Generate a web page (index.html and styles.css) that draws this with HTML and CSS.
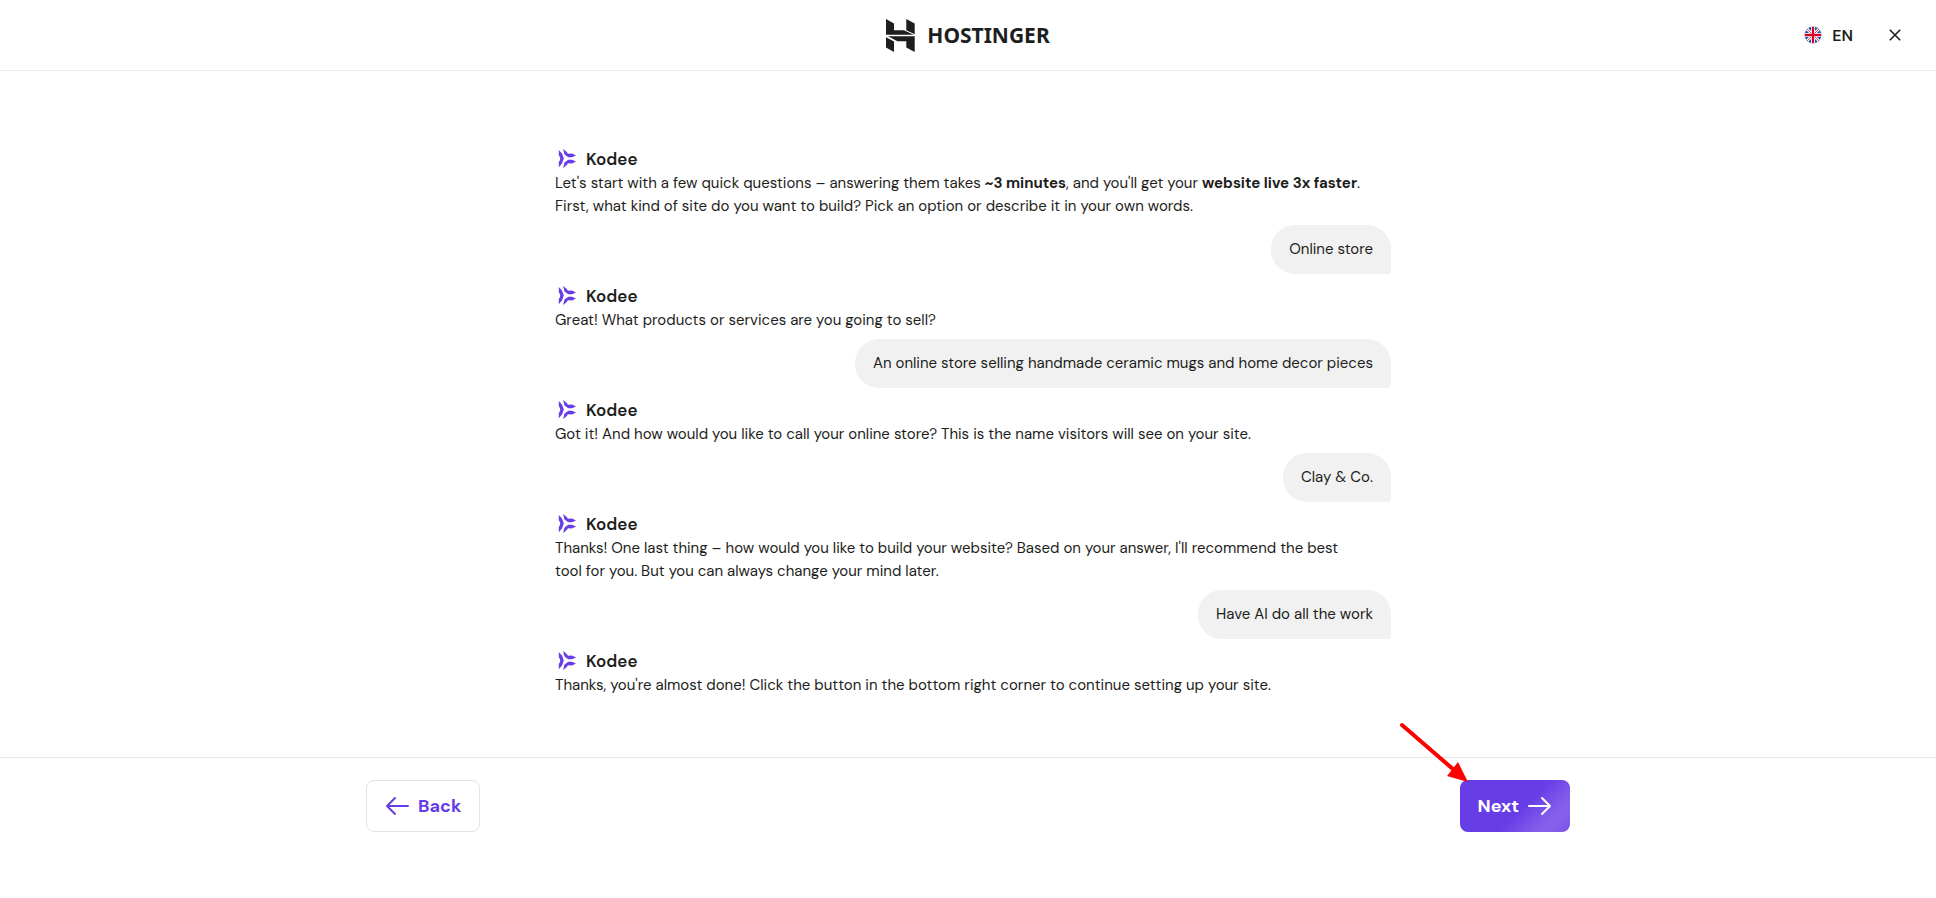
FILE: index.html
```html
<!DOCTYPE html>
<html lang="en">
<head>
<meta charset="utf-8">
<title>Hostinger</title>
<link rel="stylesheet" href="styles.css">
</head>
<body>
<svg class="defs" aria-hidden="true">
  <symbol id="kodee" viewBox="0 0 18 20">
    <path d="M.3 1 3.500 4.500 5.300 9.500 3.500 14.500.3 18.200V13Q3.200 9.500.3 6.200Z"/>
    <path d="M4.600 0 7.800 2.500 9.500 4.700 13.500 4.500 17.500 6.500 13.500 8.200H9.800L6 5.500Z"/>
    <path d="M4.600 19 7.800 16.500 9.500 14.300 13.500 14.500 17.500 12.500 13.500 10.800H9.800L6 13.500Z"/>
  </symbol>
</svg>
<header class="topbar">
  <a class="brand" href="#" aria-label="Hostinger">
    <svg class="brand-mark" viewBox="0 0 29 33" aria-hidden="true"><path d="M0 0 8 4.500V11.300H18L27.500 15.700H0ZM20.300 0 28.700 4.500V15.200L20.300 11.300ZM2 17.300H28.700V33L20.300 28.500V22.200H11.500ZM0 18.300 8 22.500V33L0 28.500Z"/></svg>
    <span class="brand-name">HOSTINGER</span>
  </a>
  <div class="tools">
    <button class="lang" type="button">
      <svg class="flag" viewBox="0 0 18 18" aria-hidden="true">
        <clipPath id="round"><circle cx="9" cy="9" r="8.500"/></clipPath>
        <g clip-path="url(#round)"><path fill="#1456b0" d="M0 0h18v18H0z"/><path stroke="#fff" stroke-width="2.800" d="m0 0 18 18M18 0 0 18"/><path stroke="#e2455f" stroke-width="1" d="m0 0 18 18M18 0 0 18"/><path stroke="#fff" stroke-width="4" d="M9 0v18M0 9h18"/><path stroke="#d80027" stroke-width="2.300" d="M9 0v18M0 9h18"/></g>
        <circle cx="9" cy="9" r="8.600" fill="none" stroke="#e3e3e6" stroke-width=".7"/>
      </svg>
      EN
    </button>
    <button class="close" type="button" aria-label="Close"><svg viewBox="0 0 12 12" aria-hidden="true"><path d="m.8.8 10.400 10.400M11.200.8.8 11.200"/></svg></button>
  </div>
</header>
<main class="chat">
  <div class="thread">
    <section class="turn">
      <h2 class="sender"><svg aria-hidden="true"><use href="#kodee"/></svg>Kodee</h2>
      <p class="message">Let's start with a few quick questions – answering them takes <b>~3 minutes</b>, and you'll get your <b>website live 3x faster</b>.<br>First, what kind of site do you want to build? Pick an option or describe it in your own words.</p>
      <p class="reply">Online store</p>
    </section>
    <section class="turn">
      <h2 class="sender"><svg aria-hidden="true"><use href="#kodee"/></svg>Kodee</h2>
      <p class="message">Great! What products or services are you going to sell?</p>
      <p class="reply">An online store selling handmade ceramic mugs and home decor pieces</p>
    </section>
    <section class="turn">
      <h2 class="sender"><svg aria-hidden="true"><use href="#kodee"/></svg>Kodee</h2>
      <p class="message">Got it! And how would you like to call your online store? This is the name visitors will see on your site.</p>
      <p class="reply">Clay &amp; Co.</p>
    </section>
    <section class="turn">
      <h2 class="sender"><svg aria-hidden="true"><use href="#kodee"/></svg>Kodee</h2>
      <p class="message">Thanks! One last thing – how would you like to build your website? Based on your answer, I'll recommend the best<br>tool for you. But you can always change your mind later.</p>
      <p class="reply">Have AI do all the work</p>
    </section>
    <section class="turn">
      <h2 class="sender"><svg aria-hidden="true"><use href="#kodee"/></svg>Kodee</h2>
      <p class="message">Thanks, you're almost done! Click the button in the bottom right corner to continue setting up your site.</p>
    </section>
  </div>
</main>
<footer class="footer">
  <div class="actions">
    <button class="btn back" type="button"><svg class="arrow" viewBox="0 0 24 20" aria-hidden="true"><path d="M23 10H2M10 2 2 10l8 8"/></svg>Back</button>
    <div class="next-wrap">
      <button class="btn next" type="button">Next<svg class="arrow" viewBox="0 0 24 20" aria-hidden="true"><path d="M1 10h21M14 2l8 8-8 8"/></svg></button>
      <svg class="pointer" viewBox="0 0 70 60" aria-hidden="true"><path class="shaft" d="M3 3 55 48"/><path class="head" d="M69 60 59 40 48 54Z"/></svg>
    </div>
  </div>
</footer>
</body>
</html>
```
FILE: styles.css
```css
* { box-sizing: border-box; }
body {
  margin: 0;
  min-height: 100vh;
  display: flex;
  flex-direction: column;
  background: #fff;
  color: #1d1e20;
  font: 15px/23px "DM Sans", Inter, sans-serif;
}
button { font: inherit; color: inherit; background: none; border: 0; padding: 0; cursor: pointer; }
.defs { position: absolute; width: 0; height: 0; }
.topbar {
  display: grid;
  grid-template-columns: 1fr auto 1fr;
  align-items: center;
  height: 71px;
  padding: 0 35px;
  border-bottom: 1px solid #ebebed;
}
.brand { grid-column: 2; display: flex; align-items: center; gap: 12px; color: #1d1e20; text-decoration: none; }
.brand-mark { width: 29px; height: 33px; fill: #1d1e20; }
.brand-name { font: 700 21px/28px "Noto Sans", sans-serif; }
.tools { display: flex; justify-content: flex-end; align-items: center; gap: 36px; }
.lang { display: flex; align-items: center; gap: 10px; font-size: 16px; font-weight: 600; }
.flag { width: 18px; height: 18px; }
.close { display: flex; }
.close svg { width: 12px; height: 12px; stroke: #1d1e20; stroke-width: 1.6; }
.chat { flex: 1; padding: 75px 0 0 10px; }
.thread { display: flex; flex-direction: column; gap: 9px; max-width: 836px; margin: 0 auto; }
.turn { display: flex; flex-direction: column; }
.sender { display: flex; align-items: center; gap: 9px; margin: 0; padding-left: 3px; font-size: 17px; font-weight: 600; line-height: 26px; }
.sender svg { width: 19px; height: 20px; fill: #673de6; }
.message { margin: 0; }
.reply {
  align-self: flex-end;
  margin: 7px 0 0;
  padding: 13px 18px;
  background: #f1f1f1;
  border-radius: 24px 24px 4px 24px;
}
.footer { height: 141px; padding: 22px; border-top: 1px solid #e6e6e8; }
.actions { display: flex; justify-content: space-between; max-width: 1204px; margin: 0 auto; }
.btn { display: flex; align-items: center; gap: 9px; height: 52px; padding: 0 18px; border-radius: 8px; font-size: 18px; font-weight: 700; }
.back { border: 1px solid #e3e3e8; color: #673de6; }
.next { color: #fff; background: linear-gradient(135deg, #673de6 55%, #8560ec 80%, #8560ec 88%, #7650e8); }
.arrow { width: 24px; height: 20px; fill: none; stroke: currentColor; stroke-width: 2; stroke-linecap: round; stroke-linejoin: round; }
.next-wrap { position: relative; }
.pointer { position: absolute; left: -61px; top: -58px; width: 70px; height: 60px; }
.shaft { stroke: #f00; stroke-width: 4; stroke-linecap: round; }
.head { fill: #f00; }
```
